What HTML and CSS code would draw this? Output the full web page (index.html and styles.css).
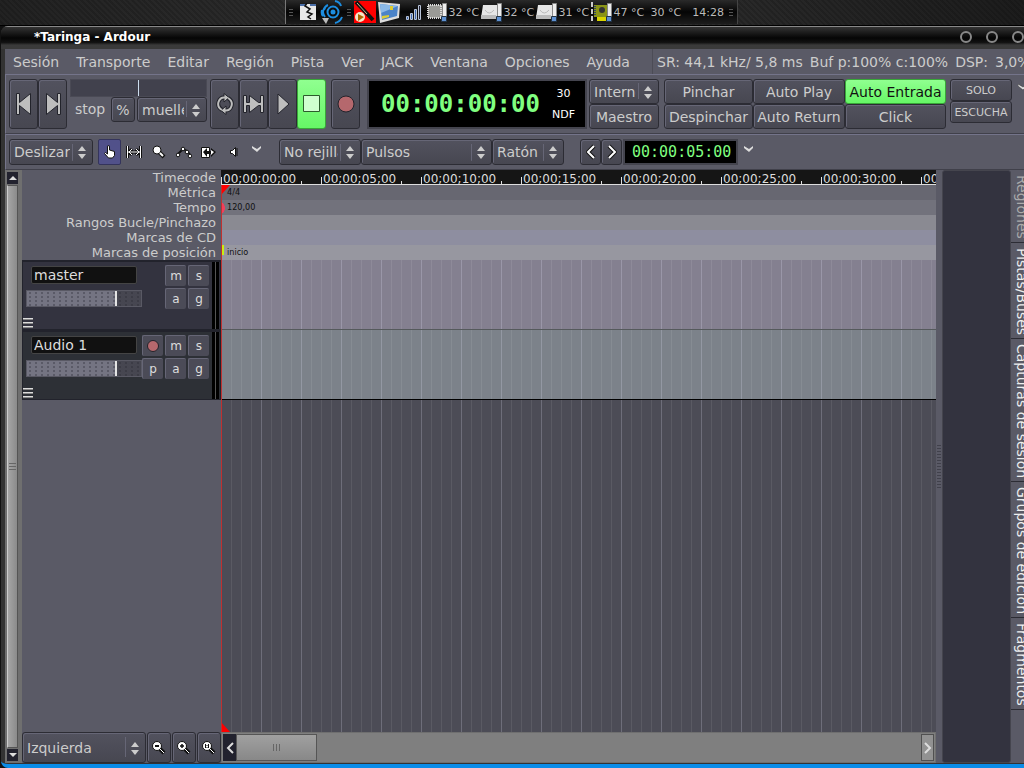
FILE: index.html
```
<!DOCTYPE html>
<html lang="es">
<head>
  <meta charset="utf-8">
  <title>*Taringa - Ardour</title>
  <link rel="stylesheet" href="styles.css">
</head>
<body>
  <div class="desktop">
    <div class="tray">
      <span class="grip"></span>
      <svg class="ic-page" width="18" height="18" viewBox="0 0 18 18"><path fill="#e8e8e8" d="M1 1h16v16H1z"/><path fill="#4a6ea8" d="M1 1h6v2H1zM11 1h6v2h-6z"/><path d="M8 0l-2 3 5 3-3 3 5 2-4 3 3 2" fill="none" stroke="#111" stroke-width="1.500"/></svg>
      <svg class="ic-net" width="24" height="24" viewBox="0 0 24 24"><g fill="none" stroke="#1c8de0" stroke-width="2"><circle cx="13" cy="12" r="5.500"/><path d="M5 7q-4 5 0 10M8 5q-3 1-4 5M15 1q5 1 6 5M22 17q-2 5-7 6M2 10q-1 4 1 6"/></g><circle cx="13" cy="12" r="2.500" fill="#1c8de0"/><path fill="#bbb" d="M2 18h7l-3 6z"/></svg>
      <span class="grip"></span>
      <svg class="ic-plug" width="22" height="22" viewBox="0 0 22 22"><path fill="#f00" d="M0 0h22v22H0z"/><path d="M2 1l17 18" stroke="#111" stroke-width="4"/><path d="M3 2l10 11" stroke="#cbb58a" stroke-width="1"/><circle cx="6" cy="16" r="5" fill="#f4e6c8"/><path fill="#a60" d="M4 13l6 3-6 4z"/></svg>
      <svg class="ic-screen" width="24" height="22" viewBox="0 0 24 22"><path fill="#ddd" d="M1 1l22 2-1 14L3 22z"/><path fill="#4b83c8" d="M3 3l18 2-1 10L5 19z"/><path fill="#8ab9e8" d="M3 3l18 2L4 12z"/><path fill="#dc3" d="M13 5h3v4h-3zM5 15l7-1v2l-7 2z"/></svg>
      <svg class="ic-signal" width="18" height="18" viewBox="0 0 18 18"><g stroke="#b8c4d8"><path fill="#3c64ac" d="M1.500 13.500h2v3h-2zM5.500 10.500h2v6h-2zM9.500 6.500h2v10h-2z"/><path fill="#223" d="M13.500 2.500h2v14h-2z"/></g></svg>
      <span class="sensor"><svg width="22" height="20" viewBox="0 0 22 20"><path fill="#9a9a96" d="M2 3h14v13H2z"/><path fill="none" stroke="#ddd" stroke-width="2" stroke-dasharray="1 1" d="M2 3h13v13H2z"/><path fill="#eee" stroke="#888" d="M16.500 1.500h4v16h-4z"/><path fill="#5d8fd0" stroke="#234" d="M15.500 14.500h5v5h-5z"/></svg>32 °C</span>
      <span class="sensor"><svg width="22" height="20" viewBox="0 0 22 20"><path fill="#e6e6e6" d="M2 3h14v13H0z"/><path fill="#bbb" d="M0 13h15v4H0z"/><path fill="none" stroke="#bbb" d="M4 8q4 6 9 0"/><path fill="#eee" stroke="#888" d="M16.500 1.500h4v16h-4z"/><path fill="#5d8fd0" stroke="#234" d="M15.500 14.500h5v5h-5z"/></svg>32 °C</span>
      <span class="sensor"><svg width="22" height="20" viewBox="0 0 22 20"><path fill="#e6e6e6" d="M2 3h14v13H0z"/><path fill="#bbb" d="M0 13h15v4H0z"/><path fill="none" stroke="#bbb" d="M4 8q4 6 9 0"/><path fill="#eee" stroke="#888" d="M16.500 1.500h4v16h-4z"/><path fill="#5d8fd0" stroke="#234" d="M15.500 14.500h5v5h-5z"/></svg>31 °C</span>
      <span class="sensor"><svg width="22" height="20" viewBox="0 0 22 20"><path fill="#899316" d="M3 3h13v12H3z"/><path fill="#d8d400" d="M6 15h10v4H6z"/><path d="M1 0v20" stroke="#ccc" stroke-width="2" stroke-dasharray="5 2"/><path d="M4 4v10" stroke="#346" stroke-width="2" stroke-dasharray="1 1"/><circle cx="11" cy="8" r="3" fill="#333"/><path fill="#eee" stroke="#888" d="M16.500 1.500h4v16h-4z"/><path fill="#5d8fd0" stroke="#234" d="M15.500 14.500h5v5h-5z"/></svg>47 °C</span>
      <span class="temp">30 °C</span>
      <span class="time">14:28</span>
      <span class="grip"></span>
    </div>
  </div>

  <div class="window">
    <div class="titlebar">
      <span class="title">*Taringa - Ardour</span>
      <button class="wbtn" aria-label="Minimizar"></button>
      <button class="wbtn" aria-label="Maximizar"></button>
      <button class="wbtn" aria-label="Cerrar"></button>
    </div>

    <div class="menubar">
      <nav>
        <a href="#">Sesión</a>
        <a href="#">Transporte</a>
        <a href="#">Editar</a>
        <a href="#">Región</a>
        <a href="#">Pista</a>
        <a href="#">Ver</a>
        <a href="#">JACK</a>
        <a href="#">Ventana</a>
        <a href="#">Opciones</a>
        <a href="#">Ayuda</a>
      </nav>
      <div class="status"><span>SR: 44,1 kHz/ 5,8 ms</span><span>Buf p:100% c:100%</span><span>DSP:</span><span>3,0%</span></div>
    </div>

    <div class="toolbar transport">
      <button class="tbtn" aria-label="Inicio"><svg width="18" height="26" viewBox="0 0 18 26"><path fill="#bebebe" stroke="#22232b" d="M1.500 2.500h3v9L15.500 2.500v21L4.500 14.500v9h-3z"/></svg></button>
      <button class="tbtn" aria-label="Final"><svg width="18" height="26" viewBox="0 0 18 26"><path fill="#bebebe" stroke="#22232b" d="M16.500 2.500h-3v9L2.500 2.500v21l11-9v9h3z"/></svg></button>
      <div class="shuttle">
        <div class="shuttle-bar"></div>
        <div class="shuttle-row">
          <span class="speed">stop</span>
          <button class="btn pct">%</button>
          <label class="combo w-muelle"><select aria-label="Modo"><option>muelle</option></select></label>
        </div>
      </div>
      <button class="tbtn" aria-label="Bucle"><svg width="18" height="22" viewBox="0 0 18 22"><g fill="none"><path d="M6 17Q1 14 2.500 9T9 4.500M12 5q5 3 3.500 8T9 17.500" stroke="#22232b" stroke-width="4"/></g><path fill="#bebebe" stroke="#22232b" d="M8 .500l5 4-5 4.500zM10 21.500l-5-4 5-4.500z"/><path d="M6 17Q1 14 2.500 9T9 4.500M12 5q5 3 3.500 8T9 17.500" fill="none" stroke="#bebebe" stroke-width="2"/></svg></button>
      <button class="tbtn" aria-label="Reproducir rango"><svg width="21" height="20" viewBox="0 0 21 20"><path fill="#bebebe" stroke="#22232b" d="M.500 1.500h3v7h3v-7l9 7h2v-7h3v17h-3v-7h-2l-9 7v-7h-3v7h-3z"/></svg></button>
      <button class="tbtn" aria-label="Reproducir"><svg width="14" height="24" viewBox="0 0 14 24"><path fill="#bebebe" stroke="#22232b" d="M2 2l11 10L2 22z"/></svg></button>
      <button class="tbtn active" aria-label="Parar"><svg width="18" height="18" viewBox="0 0 18 18"><path fill="#d0ffd0" stroke="#2c5c2c" d="M.500.500h16v16H.500z"/></svg></button>
      <button class="tbtn rec-main" aria-label="Grabar"><svg width="18" height="18" viewBox="0 0 18 18"><circle cx="9" cy="9" r="8" fill="#b5686d" stroke="#22232b"/></svg></button>
      <div class="clock"><span class="digits">00:00:00:00</span><span class="rate"><span>30</span><span>NDF</span></span></div>
      <div class="pair sync">
        <label class="combo"><select aria-label="Sincronización"><option>Interno</option></select></label>
        <button class="btn">Maestro</button>
      </div>
      <div class="modes">
        <button class="btn">Pinchar</button>
        <button class="btn">Auto Play</button>
        <button class="btn active">Auto Entrada</button>
        <button class="btn">Despinchar</button>
        <button class="btn">Auto Return</button>
        <button class="btn">Click</button>
      </div>
      <div class="pair solo">
        <button class="btn">SOLO</button>
        <button class="btn">ESCUCHA</button>
      </div>
      <svg class="more" width="10" height="7" viewBox="0 0 10 7"><path fill="#ddd" stroke="#333" stroke-width=".5" d="M0 0l5 3 4-3v2L5 6 0 2z"/></svg>
    </div>

    <div class="toolbar tools">
      <label class="combo w-slide"><select aria-label="Modo de edición"><option>Deslizar</option></select></label>
      <div class="mouse-tools">
        <button class="mt on" aria-label="Mover"><svg width="12" height="14" viewBox="0 0 12 14"><path fill="#fff" stroke="#111" d="M3.500 9V2q0-1.500 1-1.500t1 1.500v3l5 1.500v4l-2 2.500h-4L.500 8.500l1-1z"/></svg></button>
        <button class="mt" aria-label="Rango"><svg width="16" height="14" viewBox="0 0 16 14"><path d="M1.500 1v12M14.500 1v12M2 7h12M6 4L3 7l3 3M10 4l3 3-3 3" fill="none" stroke="#111" stroke-width="3"/><path d="M1.500 1v12M14.500 1v12M2 7h12M6 4L3 7l3 3M10 4l3 3-3 3" fill="none" stroke="#fff"/></svg></button>
        <button class="mt" aria-label="Zoom"><svg width="14" height="14" viewBox="0 0 14 14"><path d="M7 7l5 5" stroke="#111" stroke-width="4"/><circle cx="5" cy="5" r="4" fill="#fff" stroke="#111"/><path d="M8 8l3 3" stroke="#fff" stroke-width="2"/></svg></button>
        <button class="mt" aria-label="Ganancia"><svg width="16" height="14" viewBox="0 0 16 14"><path d="M1 10l6-6 4 2 4 5" fill="none" stroke="#111" stroke-width="2"/><g fill="#fff" stroke="#111"><circle cx="2" cy="10" r="1.800"/><circle cx="7" cy="4" r="1.800"/><circle cx="11" cy="7" r="1.800"/><circle cx="14" cy="11" r="1.800"/></g></svg></button>
        <button class="mt" aria-label="Estirar"><svg width="16" height="14" viewBox="0 0 16 14"><path fill="#fff" stroke="#111" d="M.500 2.500h8v10h-8z"/><path fill="#111" d="M2 7l4-4v3h4V3l5 4-5 5V9H6v3z"/><path fill="#fff" d="M10 5l3 2-3 3z"/></svg></button>
        <button class="mt" aria-label="Escuchar"><svg width="10" height="12" viewBox="0 0 10 12"><path fill="#fff" stroke="#111" d="M1.500 4.500h2l3-3v9l-3-3h-2z"/><path d="M8 2v8" stroke="#111"/></svg></button>
        <svg class="chev" width="10" height="7" viewBox="0 0 10 7"><path fill="#ddd" d="M0 0l5 3 4-3v2L5 6 0 2z"/></svg>
      </div>
      <label class="combo w-snap"><select aria-label="Ajuste"><option>No rejilla</option></select></label>
      <label class="combo w-pulse"><select aria-label="Unidad"><option>Pulsos</option></select></label>
      <label class="combo w-mouse"><select aria-label="Punto de zoom"><option>Ratón</option></select></label>
      <div class="nudge">
        <button class="btn" aria-label="Atrás"><svg width="10" height="16" viewBox="0 0 10 16"><path d="M8 2L2 8l6 6" fill="none" stroke="#111" stroke-width="4"/><path d="M8 2L2 8l6 6" fill="none" stroke="#fff" stroke-width="2"/></svg></button>
        <button class="btn" aria-label="Adelante"><svg width="10" height="16" viewBox="0 0 10 16"><path d="M2 2l6 6-6 6" fill="none" stroke="#111" stroke-width="4"/><path d="M2 2l6 6-6 6" fill="none" stroke="#fff" stroke-width="2"/></svg></button>
        <span class="nudge-clock">00:00:05:00</span>
        <svg class="chev" width="10" height="7" viewBox="0 0 10 7"><path fill="#ddd" d="M0 0l5 3 4-3v2L5 6 0 2z"/></svg>
      </div>
    </div>

    <div class="editor">
      <div class="vscroll">
        <button aria-label="Arriba"><svg width="8" height="4"><path fill="#ddd" d="M4 0l4 4H0z"/></svg></button>
        <div class="vthumb"></div>
        <button aria-label="Abajo"><svg width="8" height="4"><path fill="#ddd" d="M0 0h8L4 4z"/></svg></button>
      </div>

      <div class="headers">
        <ul class="ruler-names">
          <li>Timecode</li>
          <li>Métrica</li>
          <li>Tempo</li>
          <li>Rangos Bucle/Pinchazo</li>
          <li>Marcas de CD</li>
          <li>Marcas de posición</li>
        </ul>
        <div class="track master">
          <input type="text" value="master" aria-label="Nombre de pista">
          <div class="fader"></div>
          <div class="tbuttons">
            <i></i><button>m</button><button>s</button>
            <i></i><button>a</button><button>g</button>
          </div>
          <div class="lines"></div>
          <div class="meter"></div>
        </div>
        <div class="track audio">
          <input type="text" value="Audio 1" aria-label="Nombre de pista">
          <div class="fader"></div>
          <div class="tbuttons">
            <button aria-label="Grabar"><svg width="12" height="12"><circle cx="6" cy="6" r="5.500" fill="#b5686d" stroke="#22232b"/></svg></button><button>m</button><button>s</button>
            <button>p</button><button>a</button><button>g</button>
          </div>
          <div class="lines"></div>
          <div class="meter"></div>
        </div>
        <div class="bottom-left">
          <label class="combo"><select aria-label="Foco de zoom"><option>Izquierda</option></select></label>
          <button class="btn" aria-label="Alejar"><svg width="14" height="14" viewBox="0 0 14 14"><path d="M7 7l5 5" stroke="#111" stroke-width="4"/><circle cx="5" cy="5" r="4.500" fill="#fff" stroke="#111"/><path d="M8 8l4 4" stroke="#fff"/><path d="M3 5h4" stroke="#111" stroke-width="2"/></svg></button>
          <button class="btn" aria-label="Acercar"><svg width="14" height="14" viewBox="0 0 14 14"><path d="M7 7l5 5" stroke="#111" stroke-width="4"/><circle cx="5" cy="5" r="4.500" fill="#fff" stroke="#111"/><path d="M8 8l4 4" stroke="#fff"/><path d="M3 5h4M5 3v4" stroke="#111" stroke-width="1.500"/></svg></button>
          <button class="btn" aria-label="Zoom a sesión"><svg width="14" height="14" viewBox="0 0 14 14"><path d="M7 7l5 5" stroke="#111" stroke-width="4"/><circle cx="5" cy="5" r="4.500" fill="#fff" stroke="#111"/><path d="M8 8l4 4" stroke="#fff"/><path d="M3.500 3v4M6.500 3v4M5 4v1M5 6v1" stroke="#111"/></svg></button>
        </div>
      </div>

      <div class="canvas">
        <div class="ruler">
          <span>00;00;00;00</span><span>00;00;05;00</span><span>00;00;10;00</span><span>00;00;15;00</span><span>00;00;20;00</span><span>00;00;25;00</span><span>00;00;30;00</span><span>00;00;35;00</span>
        </div>
        <div class="line metric">4/4</div>
        <div class="line tempo">120,00</div>
        <div class="line ranges"></div>
        <div class="line cd"></div>
        <div class="line marks">inicio</div>
        <div class="lane lane-master"></div>
        <div class="lane lane-audio"></div>
        <div class="lane empty"></div>
        <svg class="ph-mark top" width="10" height="11"><path fill="#f00" d="M0 0h9L0 10z"/></svg>
        <svg class="ph-mark bottom" width="10" height="10"><path fill="#f00" d="M0 0l9 10H0z"/></svg>
        <div class="playhead"></div>
        <div class="hscroll">
          <button class="dark" aria-label="Izquierda"><svg width="8" height="14" viewBox="0 0 8 14"><path d="M7 2L2 7l5 5" fill="none" stroke="#ddd" stroke-width="2"/></svg></button>
          <div class="hthumb"></div>
          <button class="right" aria-label="Derecha"><svg width="8" height="14" viewBox="0 0 8 14"><path d="M1 2l5 5-5 5" fill="none" stroke="#ddd" stroke-width="2"/></svg></button>
        </div>
      </div>

      <div class="splitter"></div>
      <div class="list"></div>
      <div class="tabs">
        <button class="current">Regiones</button>
        <button>Pistas/Buses</button>
        <button>Capturas de sesión</button>
        <button>Grupos de edición</button>
        <button>Fragmentos</button>
      </div>
    </div>
  </div>
</body>
</html>
```
FILE: styles.css
```
* {
  box-sizing: border-box;
}

body {
  margin: 0;
  height: 100vh;
  display: flex;
  flex-direction: column;
  overflow: hidden;
  background: #111;
  color: #ccc;
  font-family: "DejaVu Sans", sans-serif;
  font-size: 14px;
}

button, select, input {
  font: inherit;
  color: inherit;
  margin: 0;
  padding: 0;
  border: 0;
  background: none;
}

svg {
  flex: none;
  display: block;
}

/* desktop strip and tray */
.desktop {
  flex: none;
  height: 26px;
  padding: 0 2px 1px 0;
  display: flex;
  justify-content: center;
  border-bottom: 1px solid #000;
  background: repeating-linear-gradient(45deg, transparent 0 2px, rgba(0, 0, 0, 0.15) 2px 4px), linear-gradient(90deg, #222, #333 50%, #1c1c1c);
}

.tray {
  width: 453px;
  display: flex;
  align-items: center;
  padding: 0 4px 0 3px;
  border-left: 1px solid #777;
  border-right: 1px solid #444;
  background: linear-gradient(#2a2a2a, #050505 50%, #1d1d1d);
  color: #bbb;
  font-size: 11px;
  white-space: nowrap;
}

.grip {
  flex: none;
  width: 4px;
  height: 7px;
  background: repeating-linear-gradient(#555 0 1px, transparent 1px 3px);
}

.ic-page { margin-left: 6px; }
.ic-net { margin: 0 3px 0 3px; }
.ic-plug { margin-left: 3px; }
.ic-screen { margin: 0 4px 0 1px; }
.ic-signal { margin-right: 3px; }

.sensor {
  width: 55px;
  display: flex;
  align-items: center;
  gap: 1px;
}

.temp { margin-left: 5px; }
.time { margin: 0 auto 0 11px; }

/* window frame */
.window {
  flex: 1;
  min-height: 0;
  margin-left: 1px;
  padding: 0 0 1px 4px;
  display: flex;
  flex-direction: column;
  border-radius: 7px 0 0 7px;
  border-bottom: 4px solid #0a8ce8;
  background: #333;
  overflow: hidden;
}

.titlebar {
  flex: none;
  height: 23px;
  margin-left: -4px;
  padding: 0 0 3px 33px;
  display: flex;
  align-items: center;
  gap: 14px;
  border-top: 1px solid #888;
  background: linear-gradient(#333, #050505 50%, #111 70%, #3a3a3a 82%);
}

.title {
  flex: 1;
  color: #fff;
  font-size: 12px;
  font-weight: bold;
}

.wbtn {
  flex: none;
  width: 12px;
  height: 12px;
  border: 2px solid #888;
  border-radius: 50%;
}

.menubar {
  flex: none;
  height: 25px;
  display: flex;
  align-items: center;
  background: #5a5a66;
  white-space: nowrap;
}

.menubar nav {
  width: 648px;
  flex: none;
  height: 25px;
  padding-left: 8px;
  display: flex;
  align-items: center;
  gap: 17px;
  border-right: 1px solid #4c4c56;
}

.menubar a {
  color: inherit;
  text-decoration: none;
}

.status {
  display: flex;
  gap: 7px;
  padding-left: 4px;
}

/* toolbars */
.toolbar {
  flex: none;
  display: flex;
  align-items: flex-start;
  border-top: 1px solid #74748a;
  border-left: 1px solid #74748a;
  border-bottom: 1px solid #40404a;
  background: #5a5a66;
}

.transport {
  height: 60px;
  padding: 4px 0 4px 3px;
}

.tools {
  height: 36px;
  padding: 4px 0 0 3px;
}

.btn, .tbtn, .combo {
  display: flex;
  align-items: center;
  justify-content: center;
  border: 1px solid #2c2c34;
  border-radius: 3px;
  box-shadow: inset 1px 1px #666676;
  background: linear-gradient(#52525e, #474751);
  white-space: nowrap;
}

.tbtn {
  flex: none;
  width: 29px;
  height: 50px;
}

.tbtn.rec-main {
  margin-left: 5px;
}

.btn.active, .tbtn.active {
  color: #111;
  border-color: #38a838;
  box-shadow: none;
  background: linear-gradient(#90ff90, #66f766);
}

.combo {
  position: relative;
  height: 26px;
}

.combo select {
  appearance: none;
  width: 100%;
  height: 100%;
  padding: 0 22px 0 4px;
  outline: 0;
  background: linear-gradient(#666676, #666676) calc(100% - 19px) 50% / 1px 70% no-repeat;
}

.combo::before, .combo::after {
  content: "";
  position: absolute;
  right: 6px;
  border: 4px solid transparent;
}

.combo::before {
  top: calc(50% - 10px);
  border-bottom: 5px solid #ccc;
}

.combo::after {
  top: calc(50% + 2px);
  border-top: 5px solid #ccc;
}

.shuttle {
  width: 137px;
  margin: 0 3px;
}

.shuttle-bar {
  height: 18px;
  border: 1px solid #4a4a55;
  background: linear-gradient(90deg, transparent 67px, #cde 67px 68px, transparent 68px), #41414d;
}

.shuttle-row {
  display: flex;
}

.speed {
  width: 41px;
  line-height: 25px;
  padding-left: 5px;
}

.pct {
  width: 24px;
  height: 25px;
  margin-right: 2px;
}

.shuttle .combo {
  height: 25px;
}

.w-muelle { width: 70px; }

.clock {
  flex: none;
  width: 220px;
  height: 50px;
  margin-left: 7px;
  padding-left: 12px;
  display: flex;
  align-items: center;
  gap: 12px;
  border: 2px solid #44444e;
  background: #000;
}

.digits {
  color: #80ff80;
  font-family: "DejaVu Sans Mono", monospace;
  font-size: 24px;
  font-weight: bold;
}

.rate {
  color: #fff;
  font-size: 11px;
  line-height: 21px;
  display: flex;
  flex-direction: column;
  align-items: center;
}

.pair {
  flex: none;
  display: flex;
  flex-direction: column;
}

.pair .btn, .pair .combo, .modes .btn {
  height: 25px;
}

.sync {
  width: 70px;
  margin: 0 5px 0 2px;
}

.modes {
  flex: none;
  display: grid;
  grid-template-columns: 89px 92px 101px;
}

.pair.solo {
  width: 62px;
  margin: 0 6px 0 4px;
  font-size: 11px;
}

.solo .btn {
  height: 22px;
}

.more {
  margin-top: 5px;
}

.w-slide { width: 84px; }
.w-snap { width: 82px; }
.w-pulse { width: 131px; }
.w-mouse { width: 72px; }

.mouse-tools {
  width: 186px;
  padding-left: 5px;
  display: flex;
}

.mt {
  width: 25px;
  height: 26px;
  display: flex;
  align-items: center;
  justify-content: center;
}

.mt.on {
  width: 23px;
  border: 1px solid #34345c;
  border-radius: 2px;
  background: #51518a;
}

.chev {
  margin: 7px 0 0 6px;
}

.nudge {
  display: flex;
  margin-left: 16px;
}

.nudge .btn {
  width: 21px;
  height: 26px;
}

.nudge-clock {
  height: 26px;
  margin-left: 1px;
  padding: 0 5px 0 7px;
  border: 2px solid #44444e;
  background: #000;
  color: #80ff80;
  font-family: "DejaVu Sans Mono", monospace;
  font-size: 15px;
  line-height: 22px;
}

/* editor */
.editor {
  flex: 1;
  min-height: 0;
  display: flex;
  background: #5a5a66;
}

.vscroll {
  flex: none;
  width: 17px;
  padding: 2px;
  display: flex;
  flex-direction: column;
  border-right: 2px solid #6f6f6f;
  background: #6f6f6f;
}

.vscroll button {
  height: 12px;
  display: flex;
  align-items: center;
  justify-content: center;
  background: #22222e;
}

.vthumb {
  flex: 1;
  margin: 1px 0;
  display: flex;
  border: 1px solid #555;
  border-left-color: #ccc;
  background: linear-gradient(90deg, #a5a5a5, #8b8b8b);
}

.vthumb::after {
  content: "";
  width: 7px;
  height: 7px;
  margin: auto;
  background: repeating-linear-gradient(#666 0 1px, transparent 1px 3px);
}

.headers {
  flex: none;
  width: 199px;
  display: flex;
  flex-direction: column;
}

.ruler-names {
  list-style: none;
  margin: 0;
  padding: 0 5px 0 0;
  text-align: right;
  font-size: 13px;
  line-height: 15px;
}

.track {
  height: 70px;
  display: grid;
  grid-template-columns: 118px 71px 8px;
  grid-template-rows: 27px 22px 1fr;
  border: 1px solid #22232c;
  border-top-width: 2px;
  color: #ddd;
}

.master { background: #33333f; }
.audio { background: #2d3036; }

.track input {
  width: 106px;
  height: 18px;
  margin: 4px 0 0 8px;
  padding-left: 2px;
  border: 1px solid #444;
  border-radius: 2px;
  background: #111;
}

.fader {
  grid-column: 1;
  width: 116px;
  height: 17px;
  margin: 1px 0 0 3px;
  border: 1px solid #595964;
  background:
    linear-gradient(90deg, transparent 88px, #e4e4e4 88px 90px, rgba(40, 40, 48, 0.6) 90px),
    radial-gradient(circle, #5a5a67 1px, transparent 1px) 0 0 / 6px 4px,
    #747482;
}

.tbuttons {
  grid-column: 2;
  grid-row: 1 / 4;
  margin-top: 2px;
  display: grid;
  grid-template-columns: repeat(3, 23px);
  grid-template-rows: 23px 23px;
  font-size: 12px;
}

.tbuttons button {
  width: 21px;
  height: 21px;
  margin: 1px;
  display: flex;
  align-items: center;
  justify-content: center;
  border-top: 1px solid #666676;
  border-left: 1px solid #666676;
  border-radius: 2px;
  background: #4b4b57;
}

.lines {
  grid-column: 1;
  width: 10px;
  height: 10px;
  margin-bottom: 1px;
  align-self: end;
  background: repeating-linear-gradient(#ddd 0 1px, #888 1px 2px, transparent 2px 4px);
}

.meter {
  grid-column: 3;
  grid-row: 1 / 4;
  width: 7px;
  background: linear-gradient(90deg, #000 3px, #555 3px 4px, #000 4px);
}

.bottom-left {
  flex: none;
  height: 31px;
  margin-top: auto;
  display: flex;
  gap: 1px;
}

.bottom-left .combo {
  width: 124px;
  height: 31px;
}

.bottom-left .btn {
  width: 24px;
}

.canvas {
  position: relative;
  flex: 1;
  min-width: 0;
  display: flex;
  flex-direction: column;
}

.ruler {
  flex: none;
  height: 15px;
  display: flex;
  overflow: hidden;
  border-bottom: 1px solid #ddd;
  background: #151515;
  color: #ddd;
  font-size: 12px;
  line-height: 18px;
}

.ruler span {
  flex: none;
  width: 100px;
  padding-left: 2px;
  background: linear-gradient(#ddd, #ddd) 0 100% / 1px 7px no-repeat, linear-gradient(#ddd, #ddd) 80px 100% / 1px 3px no-repeat;
}

.line {
  flex: none;
  height: 15px;
  padding-left: 6px;
  color: #111;
  font-family: "DejaVu Sans Condensed", "DejaVu Sans", sans-serif;
  font-size: 9px;
  line-height: 15px;
}

.metric { background: #676771; }
.tempo { background: radial-gradient(ellipse 4px 6px at 0 8px, #f0405c 90%, transparent), #72727c; }
.ranges { background: #8a8a92; }
.cd { background: #8e8ea0; }
.marks { background: linear-gradient(#ccee10, #ccee10) 0 0 / 3px 10px no-repeat, #9797a0; }

.lane {
  --minor: rgba(255, 255, 255, 0.08);
  --major: rgba(220, 220, 255, 0.15);
  flex: none;
  height: 70px;
  background-image: repeating-linear-gradient(90deg, var(--major) 0 1px, transparent 1px 40px), repeating-linear-gradient(90deg, var(--minor) 0 1px, transparent 1px 10px);
}

.lane-master {
  border-bottom: 1px solid #555a5c;
  background-color: #848090;
}

.lane-audio {
  border-bottom: 1px solid #000;
  background-color: #7c828a;
}

.empty {
  flex: 1;
  background-color: #4c4c56;
}

.playhead {
  position: absolute;
  left: 0;
  top: 15px;
  bottom: 31px;
  width: 1px;
  background: #c03030;
}

.ph-mark {
  position: absolute;
  left: 0;
}

.ph-mark.top { top: 15px; }
.ph-mark.bottom { bottom: 31px; }

.hscroll {
  flex: none;
  height: 31px;
  padding: 1px;
  display: flex;
  border: 1px solid #6f6f6f;
  background: #7f7f7f;
}

.hscroll button {
  width: 13px;
  display: flex;
  align-items: center;
  justify-content: center;
}

.dark { background: #22222e; }

.hscroll .right {
  margin-left: auto;
  border: 1px solid #505050;
  background: #929292;
}

.hthumb {
  width: 81px;
  display: flex;
  border: 1px solid #555;
  background: linear-gradient(#a0a0a0, #888);
}

.hthumb::after {
  content: "";
  width: 7px;
  height: 7px;
  margin: auto;
  background: repeating-linear-gradient(90deg, #666 0 1px, transparent 1px 3px);
}

.splitter {
  flex: none;
  width: 6px;
  display: flex;
  align-items: center;
}

.splitter::after {
  content: "";
  width: 4px;
  height: 43px;
  margin: 0 auto;
  background: repeating-linear-gradient(#41414b 0 1px, transparent 1px 3px);
}

.list {
  flex: none;
  width: 69px;
  border: 1px solid #45454e;
  border-radius: 3px;
  background: #33333f;
}

.tabs {
  flex: none;
  width: 13px;
  display: flex;
  flex-direction: column;
  overflow: hidden;
}

.tabs button {
  flex: none;
  width: 22px;
  padding: 5px 0 3px;
  border-bottom: 1px solid #2c2c34;
  writing-mode: vertical-rl;
  line-height: 22px;
  text-align: left;
  white-space: nowrap;
  color: #eee;
}

.tabs .current {
  color: #aaa;
}
```
